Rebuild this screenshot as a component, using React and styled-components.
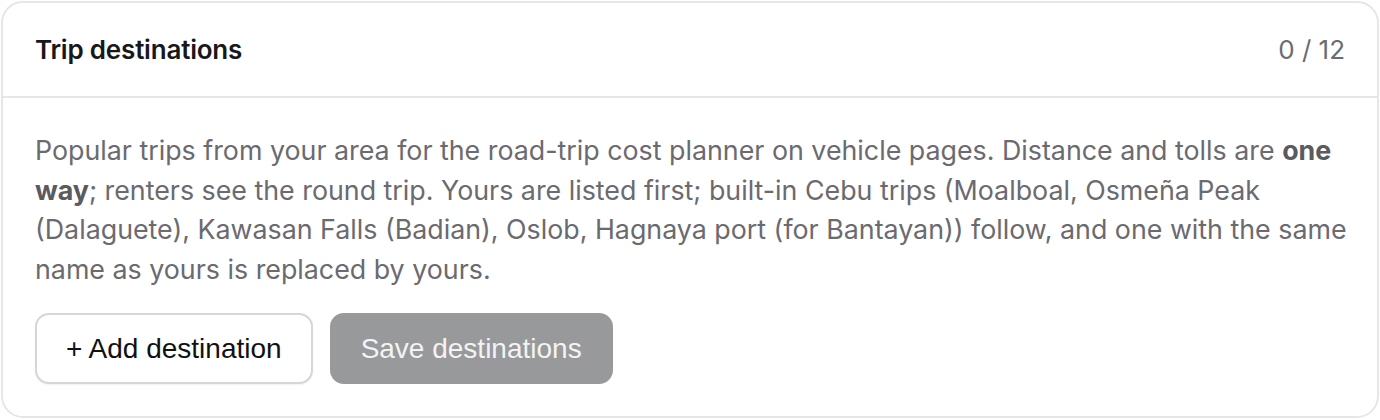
import React from "react";
import styled, { createGlobalStyle } from "styled-components";

const Global = createGlobalStyle`
  html, body { margin: 0; padding: 0; background: #ffffff; }
  body { font-family: Inter, "Noto Sans", sans-serif; }
  #root { padding: 1px; }
`;

const Card = styled.section`
  box-sizing: border-box;
  width: 1378px;
  height: 417px;
  border: 2px solid #e6e6e6;
  border-radius: 22px;
  background: #fff;
  overflow: hidden;
  display: flex;
  flex-direction: column;
`;

const Header = styled.header`
  box-sizing: border-box;
  height: 95px;
  padding: 0 32px;
  display: flex;
  align-items: center;
  justify-content: space-between;
  border-bottom: 2px solid #e6e6e6;
`;

const Title = styled.h2`
  margin: 0;
  font-size: 26px;
  font-weight: 600;
  color: #18181b;
  letter-spacing: -0.2px;
`;

const Count = styled.span`
  font-size: 26px;
  color: #6b6b70;
`;

const Body = styled.div`
  padding: 33px 26px 0 32px;
  display: flex;
  flex-direction: column;
  gap: 24px;
`;

const Text = styled.p`
  margin: 0;
  font-size: 26.8px;
  line-height: 39.6px;
  color: #6a6a6f;
  strong { font-weight: 700; color: #5a5a5f; }
`;

const Actions = styled.div`
  display: flex;
  gap: 17px;
`;

const Button = styled.button`
  box-sizing: border-box;
  height: 71px;
  padding: 0 29px;
  border-radius: 14px;
  font-family: "Liberation Sans", Arial, sans-serif;
  font-size: 28px;
  border: 2px solid ${(p) => (p.$primary ? "#98999b" : "#d6d6d6")};
  background: ${(p) => (p.$primary ? "#98999b" : "#fff")};
  color: ${(p) => (p.$primary ? "#f3f3f3" : "#111")};
  box-shadow: ${(p) => (p.$primary ? "none" : "0 1px 2px rgba(0,0,0,0.06)")};
  cursor: ${(p) => (p.disabled ? "default" : "pointer")};
`;

export default function App() {
  return (
    <>
      <Global />
      <Card>
        <Header>
          <Title>Trip destinations</Title>
          <Count>0 / 12</Count>
        </Header>
        <Body>
          <Text>
            Popular trips from your area for the road-trip cost planner on vehicle pages. Distance and tolls are{" "}
            <strong>one way</strong>; renters see the round trip. Yours are listed first; built-in Cebu trips (Moalboal, Osmeña Peak (Dalaguete), Kawasan Falls (Badian), Oslob, Hagnaya port (for Bantayan)) follow, and one with the same name as yours is replaced by yours.
          </Text>
          <Actions>
            <Button>+ Add destination</Button>
            <Button $primary disabled>Save destinations</Button>
          </Actions>
        </Body>
      </Card>
    </>
  );
}
